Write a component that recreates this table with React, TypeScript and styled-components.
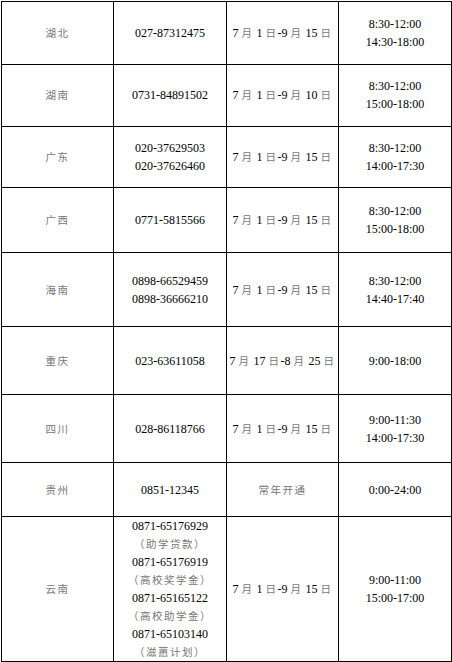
import React from 'react';
import styled, { createGlobalStyle } from 'styled-components';

const GlobalStyle = createGlobalStyle`
  html, body {
    margin: 0;
    padding: 0;
    background: #ffffff;
  }
  body {
    font-family: "Liberation Serif", "Times New Roman", serif;
  }
`;

const Page = styled.div`
  padding: 1px 0 0 1px;
`;

const Table = styled.table`
  width: 450px;
  table-layout: fixed;
  border-collapse: collapse;
`;

const Col = styled.col<{ $w: number }>`
  width: ${p => p.$w}px;
`;

const Row = styled.tr<{ $h: number }>`
  height: ${p => p.$h}px;
`;

const Cell = styled.td`
  border: 1.3px solid #000;
  padding: 0;
  text-align: center;
  vertical-align: middle;
  font-family: "Liberation Serif", "Times New Roman", serif;
  font-size: 12px;
  line-height: 18px;
  color: #000;
`;

const Line = styled.div`
  white-space: nowrap;
  font-family: "Liberation Serif", "Times New Roman", serif;
`;

const Cn = styled.span`
  font-family: "Noto Sans CJK SC", "Noto Sans", sans-serif;
  font-size: 10.5px;
  letter-spacing: 1.5px;
  color: #777;
`;

type RowData = {
  province: string;
  phones: string[];
  dates: string;
  hours: string[];
  height: number;
};

const rows: RowData[] = [
  { province: '湖北', phones: ['027-87312475'], dates: '7 月 1 日-9 月 15 日', hours: ['8:30-12:00', '14:30-18:00'], height: 63 },
  { province: '湖南', phones: ['0731-84891502'], dates: '7 月 1 日-9 月 10 日', hours: ['8:30-12:00', '15:00-18:00'], height: 61.5 },
  { province: '广东', phones: ['020-37629503', '020-37626460'], dates: '7 月 1 日-9 月 15 日', hours: ['8:30-12:00', '14:00-17:30'], height: 61 },
  { province: '广西', phones: ['0771-5815566'], dates: '7 月 1 日-9 月 15 日', hours: ['8:30-12:00', '15:00-18:00'], height: 65.5 },
  { province: '海南', phones: ['0898-66529459', '0898-36666210'], dates: '7 月 1 日-9 月 15 日', hours: ['8:30-12:00', '14:40-17:40'], height: 74 },
  { province: '重庆', phones: ['023-63611058'], dates: '7 月 17 日-8 月 25 日', hours: ['9:00-18:00'], height: 68 },
  { province: '四川', phones: ['028-86118766'], dates: '7 月 1 日-9 月 15 日', hours: ['9:00-11:30', '14:00-17:30'], height: 68 },
  { province: '贵州', phones: ['0851-12345'], dates: '常年开通', hours: ['0:00-24:00'], height: 54 },
  {
    province: '云南',
    phones: [
      '0871-65176929', '（助学贷款）',
      '0871-65176919', '（高校奖学金）',
      '0871-65165122', '（高校助学金）',
      '0871-65103140', '（滋蕙计划）',
    ],
    dates: '7 月 1 日-9 月 15 日',
    hours: ['9:00-11:00', '15:00-17:00'],
    height: 144.5,
  },
];

const cjk = /[\u3000-\u303f\u4e00-\u9fff\uff00-\uffef]+/g;

// split a line into latin runs and chinese runs so each gets its own font
function Mixed({ text }: { text: string }) {
  const parts: React.ReactNode[] = [];
  let last = 0;
  let m: RegExpExecArray | null;
  let i = 0;
  cjk.lastIndex = 0;
  while ((m = cjk.exec(text))) {
    if (m.index > last) parts.push(text.slice(last, m.index));
    parts.push(<Cn key={i++}>{m[0]}</Cn>);
    last = m.index + m[0].length;
  }
  if (last < text.length) parts.push(text.slice(last));
  return <>{parts}</>;
}

export default function App() {
  return (
    <>
      <GlobalStyle />
      <Page>
        <Table>
          <colgroup>
            <Col $w={112} />
            <Col $w={113} />
            <Col $w={112} />
            <Col $w={113} />
          </colgroup>
          <tbody>
            {rows.map(r => (
              <Row key={r.province} $h={r.height}>
                <Cell>
                  <Cn>{r.province}</Cn>
                </Cell>
                <Cell>
                  {r.phones.map(p => (
                    <Line key={p}>
                      <Mixed text={p} />
                    </Line>
                  ))}
                </Cell>
                <Cell>
                  <Line>
                    <Mixed text={r.dates} />
                  </Line>
                </Cell>
                <Cell>
                  {r.hours.map(h => (
                    <Line key={h}>{h}</Line>
                  ))}
                </Cell>
              </Row>
            ))}
          </tbody>
        </Table>
      </Page>
    </>
  );
}
